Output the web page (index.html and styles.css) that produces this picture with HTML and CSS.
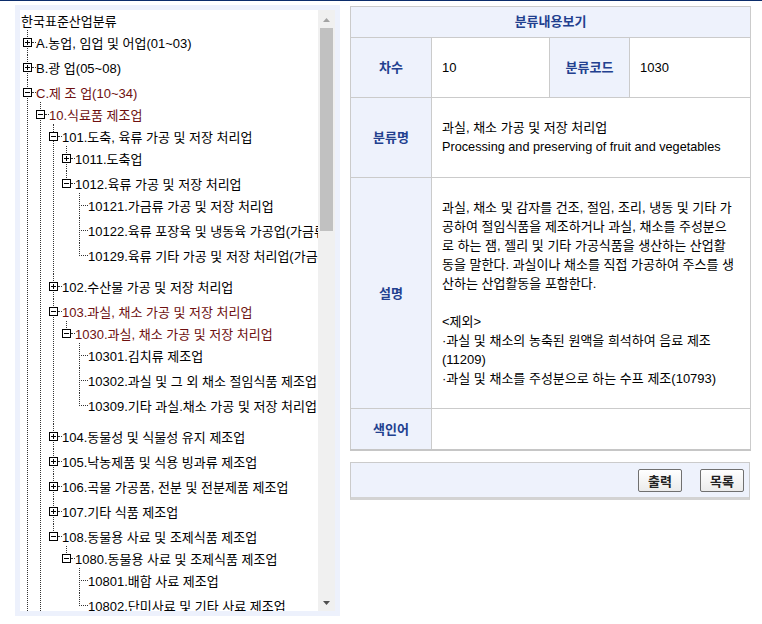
FILE: index.html
```html
<!DOCTYPE html>
<html lang="ko">
<head>
<meta charset="utf-8">
<title>분류내용보기</title>
<link rel="stylesheet" href="styles.css">
</head>
<body>
<div class="topline"></div>
<div class="wrap">
  <aside class="tree-panel">
    <div class="tree-box">
      <div class="tree">
        <div class="root">한국표준산업분류</div>
        <ul class="lv1">
          <li><div class="row"><i class="tg pl"></i><i class="cn"></i><span>A.농업, 임업 및 어업(01~03)</span></div></li>
          <li><div class="row"><i class="tg pl"></i><i class="cn"></i><span>B.광 업(05~08)</span></div></li>
          <li><div class="row"><i class="tg"></i><i class="cn"></i><span class="hl">C.제 조 업(10~34)</span></div>
            <ul>
              <li><div class="row"><i class="tg"></i><i class="cn"></i><span class="hl">10.식료품 제조업</span></div>
                <ul>
                  <li><div class="row"><i class="tg"></i><i class="cn"></i><span>101.도축, 육류 가공 및 저장 처리업</span></div>
                    <ul>
                      <li><div class="row"><i class="tg pl"></i><i class="cn"></i><span>1011.도축업</span></div></li>
                      <li class="last"><div class="row"><i class="tg"></i><i class="cn"></i><span>1012.육류 가공 및 저장 처리업</span></div>
                        <ul>
                          <li><div class="row"><i class="lf"></i><span>10121.가금류 가공 및 저장 처리업</span></div></li>
                          <li><div class="row"><i class="lf"></i><span>10122.육류 포장육 및 냉동육 가공업(가금류 제외)</span></div></li>
                          <li class="last"><div class="row"><i class="lf"></i><span>10129.육류 기타 가공 및 저장 처리업(가금류 제외)</span></div></li>
                        </ul>
                      </li>
                    </ul>
                  </li>
                  <li><div class="row"><i class="tg pl"></i><i class="cn"></i><span>102.수산물 가공 및 저장 처리업</span></div></li>
                  <li><div class="row"><i class="tg"></i><i class="cn"></i><span class="hl">103.과실, 채소 가공 및 저장 처리업</span></div>
                    <ul>
                      <li class="last"><div class="row"><i class="tg"></i><i class="cn"></i><span class="hl">1030.과실, 채소 가공 및 저장 처리업</span></div>
                        <ul>
                          <li><div class="row"><i class="lf"></i><span>10301.김치류 제조업</span></div></li>
                          <li><div class="row"><i class="lf"></i><span>10302.과실 및 그 외 채소 절임식품 제조업</span></div></li>
                          <li class="last"><div class="row"><i class="lf"></i><span>10309.기타 과실.채소 가공 및 저장 처리업</span></div></li>
                        </ul>
                      </li>
                    </ul>
                  </li>
                  <li><div class="row"><i class="tg pl"></i><i class="cn"></i><span>104.동물성 및 식물성 유지 제조업</span></div></li>
                  <li><div class="row"><i class="tg pl"></i><i class="cn"></i><span>105.낙농제품 및 식용 빙과류 제조업</span></div></li>
                  <li><div class="row"><i class="tg pl"></i><i class="cn"></i><span>106.곡물 가공품, 전분 및 전분제품 제조업</span></div></li>
                  <li><div class="row"><i class="tg pl"></i><i class="cn"></i><span>107.기타 식품 제조업</span></div></li>
                  <li class="last"><div class="row"><i class="tg"></i><i class="cn"></i><span>108.동물용 사료 및 조제식품 제조업</span></div>
                    <ul>
                      <li class="last"><div class="row"><i class="tg"></i><i class="cn"></i><span>1080.동물용 사료 및 조제식품 제조업</span></div>
                        <ul>
                          <li><div class="row"><i class="lf"></i><span>10801.배합 사료 제조업</span></div></li>
                          <li class="last"><div class="row"><i class="lf"></i><span>10802.단미사료 및 기타 사료 제조업</span></div></li>
                        </ul>
                      </li>
                    </ul>
                  </li>
                </ul>
              </li>
              <li><div class="row"><i class="tg pl"></i><i class="cn"></i><span>11.음료 제조업</span></div></li>
            </ul>
          </li>
        </ul>
      </div>
      <div class="sbar">
        <div class="sbtn up"><svg width="7" height="4" viewBox="0 0 7 4"><polygon points="3.5,0 7,4 0,4" fill="#a3a3a3"/></svg></div>
        <div class="thumb"></div>
        <div class="sfill"></div>
        <div class="sbtn down"><svg width="7" height="4" viewBox="0 0 7 4"><polygon points="0,0 7,0 3.5,4" fill="#505050"/></svg></div>
      </div>
    </div>
  </aside>

  <main class="detail">
    <table class="info">
      <colgroup><col class="c1"><col class="c2"><col class="c3"><col class="c4"></colgroup>
      <tr><th colspan="4" class="head">분류내용보기</th></tr>
      <tr><th>차수</th><td>10</td><th>분류코드</th><td>1030</td></tr>
      <tr><th>분류명</th><td colspan="3">과실, 채소 가공 및 저장 처리업<br><span class="en">Processing and preserving of fruit and vegetables</span></td></tr>
      <tr><th>설명</th><td colspan="3" class="desc">과실, 채소 및 감자를 건조, 절임, 조리, 냉동 및 기타 가<br>공하여 절임식품을 제조하거나 과실, 채소를 주성분으<br>로 하는 잼, 젤리 및 기타 가공식품을 생산하는 산업활<br>동을 말한다. 과실이나 채소를 직접 가공하여 주스를 생<br>산하는 산업활동을 포함한다.<br><br>&lt;제외&gt;<br>·과실 및 채소의 농축된 원액을 희석하여 음료 제조<br>(11209)<br>·과실 및 채소를 주성분으로 하는 수프 제조(10793)</td></tr>
      <tr class="lastrow"><th>색인어</th><td colspan="3"></td></tr>
    </table>
    <div class="btnbar">
      <button class="btn" type="button">출력</button>
      <button class="btn" type="button">목록</button>
    </div>
  </main>
</div>
</body>
</html>
```
FILE: styles.css
```css
* { box-sizing: border-box; }
html, body { margin: 0; padding: 0; background: #fff; }
body {
  font-family: "Liberation Sans", "Noto Sans CJK KR", sans-serif;
  font-size: 13px;
  color: #000;
  width: 762px;
  height: 624px;
  overflow: hidden;
}
.topline { height: 1px; background: #0c2d6b; }
.wrap { display: flex; align-items: flex-start; gap: 10px; padding: 4px 0 0 15px; }

/* left tree panel */
.tree-panel { width: 325px; height: 611px; padding: 5px; background: #edf1fc; }
.tree-box { display: flex; height: 601px; background: #fff; }
.tree { flex: 1; overflow: hidden; white-space: nowrap; }
.tree ul { list-style: none; margin: -3px 0 0 0; padding: 0 0 3px 13px; }
.tree ul.lv1 { padding-left: 3px; }
.tree li { position: relative; }
.tree li::before {
  content: "";
  position: absolute;
  left: 4px; top: 0; bottom: 0;
  border-left: 1px dotted #333;
}
.tree li.last::before { bottom: auto; height: 13px; }
.root { height: 23px; line-height: 23px; padding-left: 1px; }
.row { display: flex; align-items: center; height: 25px; position: relative; }
.tg {
  flex: none;
  width: 9px; height: 9px;
  border: 1px solid #000;
  background: #fff;
  position: relative;
  z-index: 1;
}
.tg::before {
  content: ""; position: absolute;
  left: 1px; top: 3px; width: 5px; height: 1px; background: #000;
}
.tg.pl::after {
  content: ""; position: absolute;
  left: 3px; top: 1px; width: 1px; height: 5px; background: #000;
}
.cn { flex: none; width: 4px; height: 0; border-top: 1px dotted #333; }
.lf { flex: none; width: 9px; height: 0; margin-left: 4px; border-top: 1px dotted #333; }
.hl { color: #6e1010; }

/* fake scrollbar */
.sbar { width: 17px; background: #f0f0f0; display: flex; flex-direction: column; align-items: center; }
.sbtn { width: 17px; height: 17px; display: flex; justify-content: center; align-items: center; flex: none; }
.sbtn.up { padding-top: 3px; }
.sbtn svg { display: block; }
.thumb { width: 13px; height: 203px; margin-top: 1px; background: #c1c1c1; flex: none; }
.sfill { flex: 1; }

/* right detail */
.detail { width: 400px; margin-top: 1px; }
.info { width: 400px; border-collapse: collapse; table-layout: fixed; }
.info .c1 { width: 81px; }
.info .c2 { width: 118px; }
.info .c3 { width: 80px; }
.info .c4 { width: 121px; }
.info th, .info td { border: 1px solid #cbcbcb; line-height: 19px; }
.info th {
  background: #eef2fc;
  color: #22408f;
  font-weight: bold;
  text-align: center;
  padding: 10px 4px;
}
.info th.head { padding: 5px 4px; line-height: 20px; }
.info td { padding: 20px 10px; text-align: left; vertical-align: middle; }
.info .en { font-size: 12.7px; }
.info .lastrow th, .info .lastrow td { border-bottom: 2px solid #c6c6c6; }

.btnbar {
  margin-top: 11px;
  height: 38px;
  border: 1px solid #cbcbcb;
  border-bottom: 3px solid #d3d3d3;
  background: #eef2fc;
  display: flex;
  justify-content: flex-end;
  align-items: flex-start;
  gap: 18px;
  padding: 6px 5px 0 0;
}
.btn {
  width: 44px; height: 23px;
  padding: 0;
  border: 1px solid #707070;
  border-radius: 2px;
  background: linear-gradient(#ffffff, #ebebeb);
  font-family: "Liberation Sans", "Noto Sans CJK KR", sans-serif;
  font-size: 13px;
  font-weight: bold;
  color: #222;
}
```
